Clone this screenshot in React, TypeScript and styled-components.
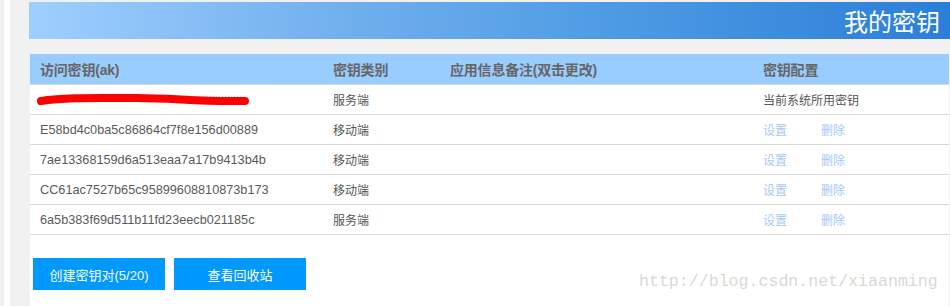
import styled, { createGlobalStyle } from 'styled-components'

const GlobalStyle = createGlobalStyle`
  html, body {
    margin: 0;
    padding: 0;
    background: #f1f1f1;
  }
  body {
    font-family: 'Liberation Sans', 'Noto Sans CJK SC', sans-serif;
  }
`

const keys = [
  { ak: null, kind: '服务端', current: true },
  { ak: 'E58bd4c0ba5c86864cf7f8e156d00889', kind: '移动端', current: false },
  { ak: '7ae13368159d6a513eaa7a17b9413b4b', kind: '移动端', current: false },
  { ak: 'CC61ac7527b65c95899608810873b173', kind: '移动端', current: false },
  { ak: '6a5b383f69d511b11fd23eecb021185c', kind: '服务端', current: false },
]

// the redacted key in the first row
function Scribble() {
  return (
    <svg width="214" height="16" viewBox="0 0 214 16">
      <path
        d="M60 5 L206 5"
        stroke="#d0d0d0"
        strokeWidth="2"
        strokeDasharray="1 2"
        fill="none"
      />
      <path
        d="M5 9 C 30 5, 60 6, 100 6 S 160 10, 209 9"
        stroke="#ff0000"
        strokeWidth="8"
        strokeLinecap="round"
        fill="none"
      />
      <path d="M10 7 C 40 5, 80 5, 130 6" stroke="#ff0000" strokeWidth="5" strokeLinecap="round" fill="none" />
    </svg>
  )
}

function App() {
  return (
    <Page>
      <GlobalStyle />
      <SideRail />
      <Main>
        <Banner>
          <Title>我的密钥</Title>
        </Banner>
        <Panel>
          <HeadRow>
            <HeadCell>访问密钥(ak)</HeadCell>
            <HeadCell>密钥类别</HeadCell>
            <HeadCell>应用信息备注(双击更改)</HeadCell>
            <HeadCell>密钥配置</HeadCell>
          </HeadRow>
          {keys.map(({ ak, kind, current }, index) => (
            <Row key={index}>
              <KeyCell>{ak ?? <Scribble />}</KeyCell>
              <Cell>{kind}</Cell>
              <Cell />
              <Cell>
                {current ? (
                  '当前系统所用密钥'
                ) : (
                  <Links>
                    <LinkText>设置</LinkText>
                    <LinkText>删除</LinkText>
                  </Links>
                )}
              </Cell>
            </Row>
          ))}
          <Actions>
            <Button>创建密钥对(5/20)</Button>
            <Button>查看回收站</Button>
          </Actions>
          <Watermark>http://blog.csdn.net/xiaanming</Watermark>
        </Panel>
      </Main>
    </Page>
  )
}

const Page = styled.div`
  display: flex;
  width: 950px;
  height: 306px;
  overflow: hidden;
`

const SideRail = styled.div`
  width: 6px;
  border-left: 4px solid #f1f1f1;
  background: #ffffff;
  flex-shrink: 0;
`

const Main = styled.div`
  flex: 1;
  display: flex;
  flex-direction: column;
  padding: 2px 0 0 19px;
`

const Banner = styled.div`
  height: 37px;
  display: flex;
  align-items: center;
  justify-content: flex-end;
  padding-right: 10px;
  background: linear-gradient(to right, #9ecffe 0%, #74b1ee 32%, #4f9ce5 62%, #2b7ed8 100%);
`

const Title = styled.h1`
  margin: 0;
  font-family: 'Noto Sans CJK SC', sans-serif;
  font-size: 24px;
  font-weight: normal;
  color: #ffffff;
  line-height: 1;
`

const Panel = styled.div`
  position: relative;
  flex: 1;
  margin: 15px 1px 0 1px;
  background: #ffffff;
`

const grid = `
  display: grid;
  grid-template-columns: 293px 117px 313px 1fr;
  border-bottom: 1px solid #d9d9d9;
`

const HeadRow = styled.div`
  ${grid}
  height: 30px;
  background: #99ccff;
`

const HeadCell = styled.div`
  display: flex;
  align-items: center;
  padding-left: 10px;
  font-size: 14px;
  font-weight: bold;
  color: #666666;
  letter-spacing: -0.2px;
`

const Row = styled.div`
  ${grid}
  height: 29px;
`

const Cell = styled.div`
  display: flex;
  align-items: center;
  padding-left: 10px;
  font-size: 12px;
  color: #555555;
`

const KeyCell = styled(Cell)`
  font-size: 12.7px;
  color: #5a5a5a;
  svg {
    margin-left: -4px;
  }
`

const Links = styled.div`
  display: flex;
  gap: 34px;
`

const LinkText = styled.span`
  color: #a5c9f3;
  cursor: pointer;
`

const Actions = styled.div`
  display: flex;
  gap: 9px;
  padding: 23px 0 0 3px;
`

const Button = styled.button`
  width: 132px;
  height: 32px;
  border: none;
  background: #0099ff;
  color: #ffffff;
  font-family: 'Liberation Sans', 'Noto Sans CJK SC', sans-serif;
  font-size: 13px;
  padding: 0;
`

const Watermark = styled.div`
  position: absolute;
  left: 609px;
  top: 218px;
  font-family: 'Liberation Mono', monospace;
  font-size: 16.6px;
  color: #d9d9d4;
  white-space: nowrap;
  pointer-events: none;
`

export default App
